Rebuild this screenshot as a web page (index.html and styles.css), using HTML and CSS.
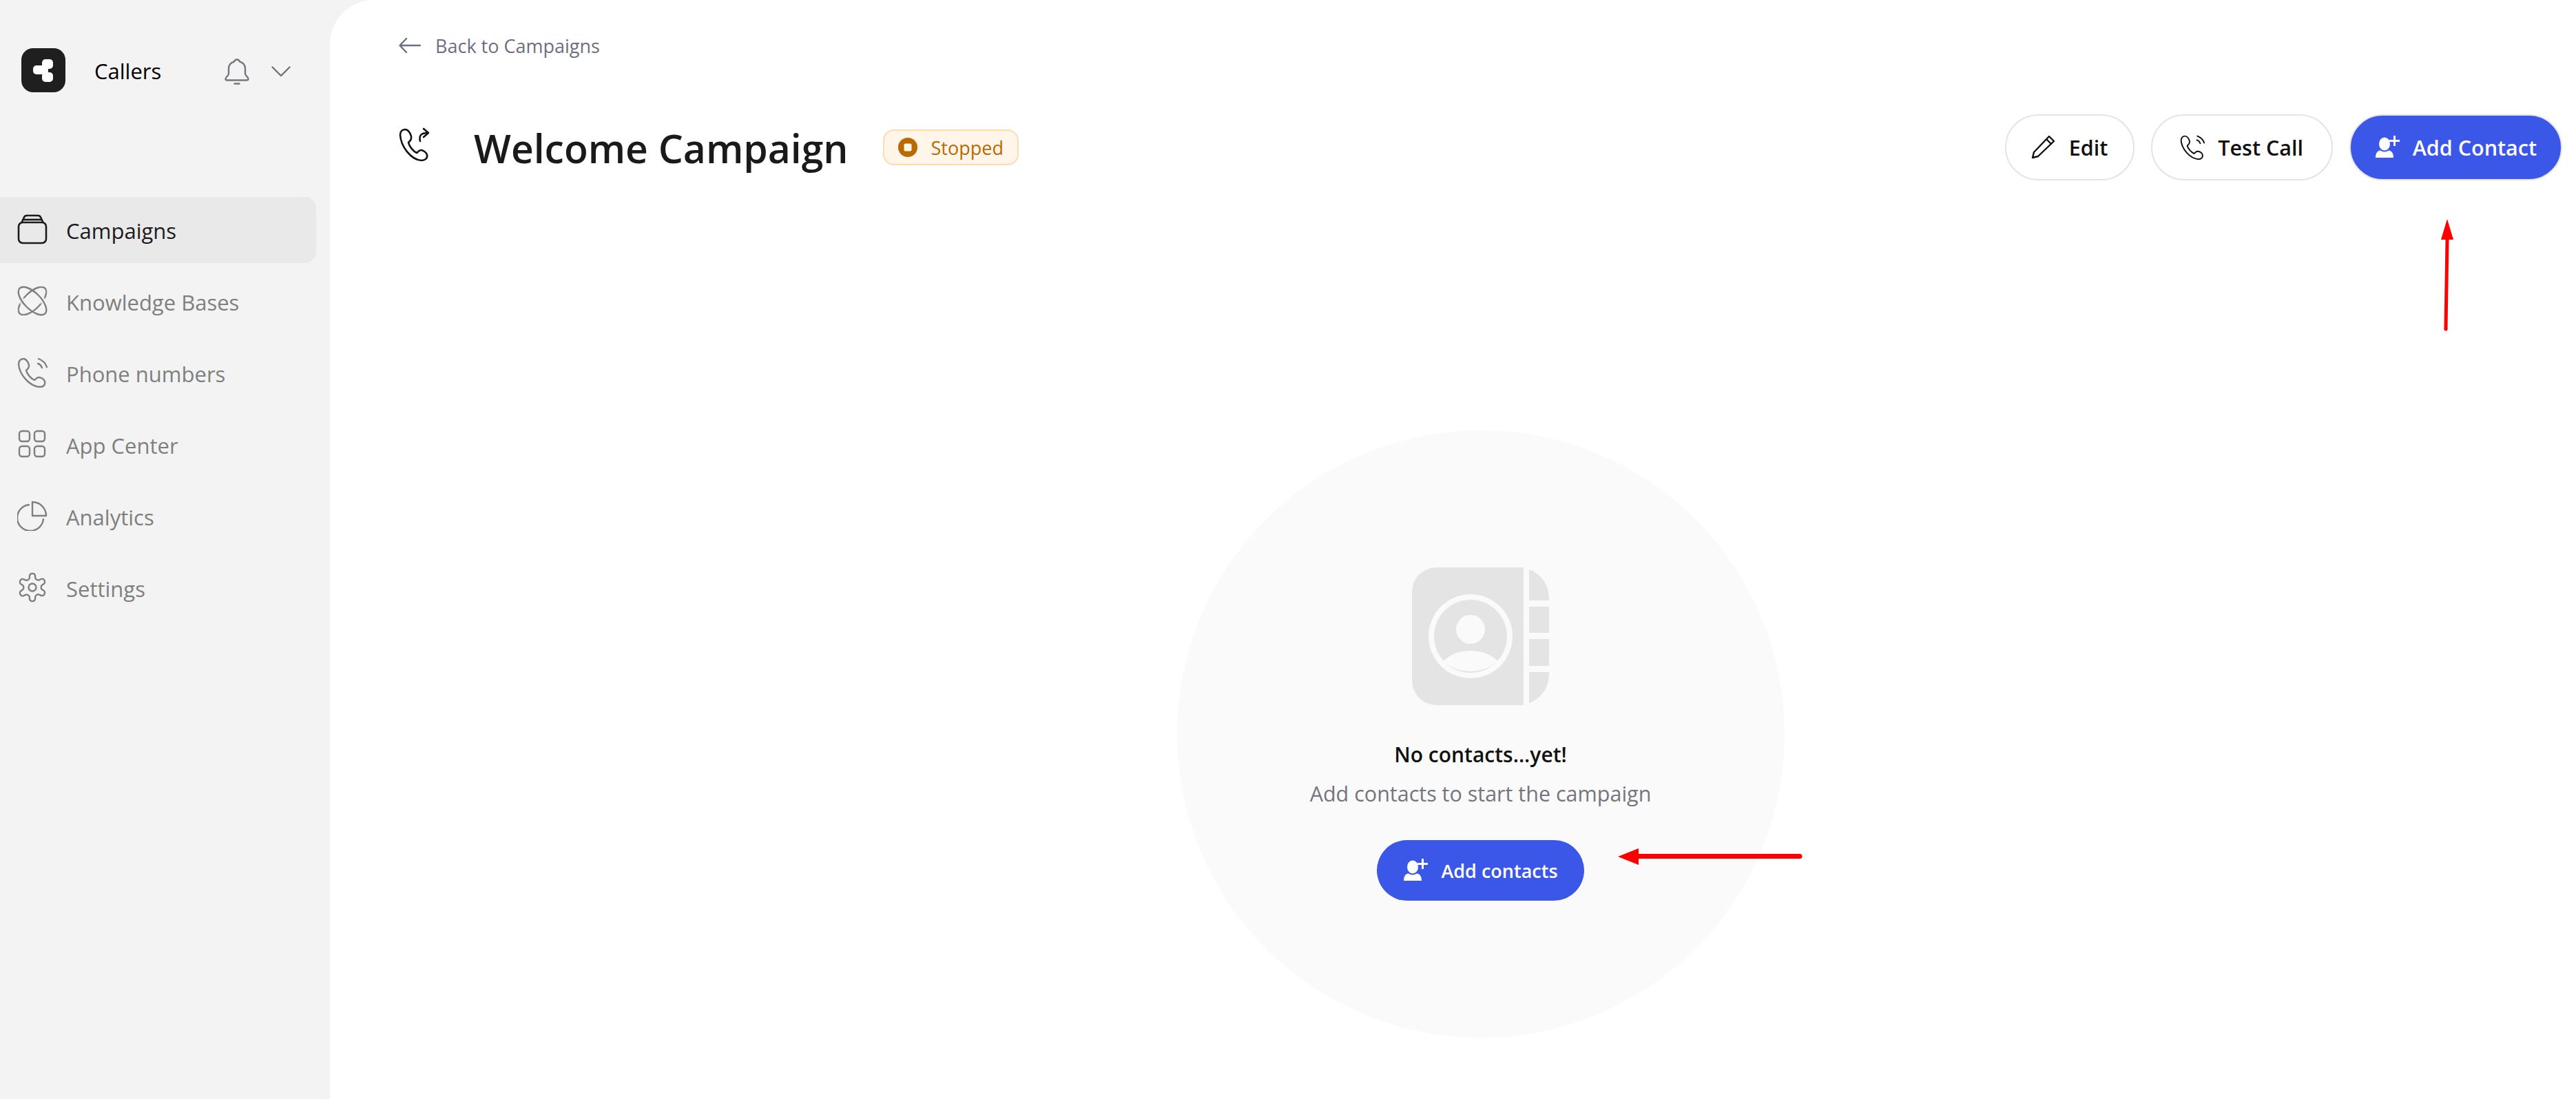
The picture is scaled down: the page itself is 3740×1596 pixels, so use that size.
FILE: index.html
```html
<!DOCTYPE html>
<html lang="en">
<head>
  <meta charset="UTF-8">
  <meta name="viewport" content="width=device-width, initial-scale=1.0">
  <title>Welcome Campaign</title>
  <link rel="stylesheet" href="styles.css">
</head>
<body>
  <aside class="sidebar">
    <div class="brand">
      <svg class="logo" viewBox="0 0 64 64">
        <rect width="64" height="64" rx="17" fill="#1f1f1f"/>
        <rect x="30" y="16" width="16" height="14" rx="5" fill="#fff"/>
        <rect x="30" y="35" width="16" height="14" rx="5" fill="#fff"/>
        <rect x="17" y="25" width="19" height="13" rx="5" fill="#fff"/>
        <rect x="30" y="26" width="9" height="12" fill="#fff"/>
      </svg>
      <span class="brand-name">Callers</span>
      <svg class="bell" viewBox="0 0 36 38" fill="none" stroke="#75757f" stroke-width="2.4" stroke-linejoin="round" stroke-linecap="round">
        <path d="M18 1.500c-2 0-3.500 1.400-4 3C8.500 6 6 10 6 15v7c0 3-4.500 4.500-4.500 7.500 0 1.500 1 2 2.500 2h28c1.500 0 2.500-.5 2.500-2 0-3-4.500-4.500-4.500-7.500v-7c0-5-2.500-9-8-10.500-.5-1.600-2-3-4-3z"/>
        <path d="M14.500 36.500h7"/>
      </svg>
      <svg class="chevron" viewBox="0 0 28 16" fill="none" stroke="#6b7570" stroke-width="2.400" stroke-linecap="round" stroke-linejoin="round">
        <path d="M1.500 1.500 14 14 26.500 1.500"/>
      </svg>
    </div>
    <nav class="nav">
      <a class="nav-item active">
        <svg class="nav-icon" viewBox="0 0 44 44" fill="none" stroke="currentColor" stroke-width="2.600" stroke-linejoin="round">
          <rect x="2" y="12" width="40" height="30" rx="6"/>
          <path d="M6 13 10 4.500Q11 2 14 2h16q3 0 4 2.500L38 13"/>
          <path d="M8.500 8h27"/>
        </svg>
        Campaigns
      </a>
      <a class="nav-item">
        <svg class="nav-icon" viewBox="0 0 44 44" fill="none" stroke="currentColor" stroke-width="2.400">
          <defs>
            <mask id="orbit-gap">
              <rect width="44" height="44" fill="#fff"/>
              <circle cx="6.600" cy="22" r="4.500" fill="#000"/>
              <circle cx="37.400" cy="22" r="4.500" fill="#000"/>
            </mask>
          </defs>
          <ellipse cx="22" cy="22" rx="26" ry="12" transform="rotate(45 22 22)"/>
          <g mask="url(#orbit-gap)">
            <ellipse cx="22" cy="22" rx="26" ry="12" transform="rotate(-45 22 22)"/>
          </g>
        </svg>
        Knowledge Bases
      </a>
      <a class="nav-item">
        <svg class="nav-icon" viewBox="0 0 44 44" fill="none" stroke="currentColor" stroke-width="2.400" stroke-linejoin="round" stroke-linecap="round">
          <path d="M9 2C5 2 2 5 2 10c1 14 15 32 31 33 5 0 8-3 7-8-1-4-6-6-9-6s-4 3-6 4c-5-2-11-9-12-14 2-2 5-4 4-8-1-4-4-9-8-9z"/>
          <path d="M30 9c3 1 5 3 6 6"/>
          <path d="M31 2c5 2 10 6 12 12"/>
        </svg>
        Phone numbers
      </a>
      <a class="nav-item">
        <svg class="nav-icon" viewBox="0 0 44 44" fill="none" stroke="currentColor" stroke-width="2.400">
          <rect x="3" y="3" width="15" height="15" rx="4"/>
          <rect x="25" y="3" width="15" height="15" rx="4"/>
          <rect x="3" y="25" width="15" height="15" rx="4"/>
          <rect x="25" y="25" width="15" height="15" rx="4"/>
        </svg>
        App Center
      </a>
      <a class="nav-item">
        <svg class="nav-icon" viewBox="0 0 44 44" fill="none" stroke="currentColor" stroke-width="2.400" stroke-linejoin="round">
          <path d="M18 6A19 19 0 1 0 38 26"/>
          <path d="M22 2a20 20 0 0 1 20 20H22z"/>
        </svg>
        Analytics
      </a>
      <a class="nav-item">
        <svg class="nav-icon" viewBox="0 0 24 24" fill="none" stroke="currentColor" stroke-width="1.300">
          <path d="M12.220 1h-.44a2 2 0 0 0-2 2v1.180a2 2 0 0 1-1 1.730l-.43.250a2 2 0 0 1-2 0l-1-.5a2 2 0 0 0-2.730.730l-.220.380a2 2 0 0 0 .730 2.730l.95.6a2 2 0 0 1 1 1.720v.51a2 2 0 0 1-1 1.740l-.95.590a2 2 0 0 0-.730 2.730l.220.380a2 2 0 0 0 2.730.730l1-.5a2 2 0 0 1 2 0l.43.250a2 2 0 0 1 1 1.730V21a2 2 0 0 0 2 2h.44a2 2 0 0 0 2-2v-1.180a2 2 0 0 1 1-1.730l.43-.250a2 2 0 0 1 2 0l1 .5a2 2 0 0 0 2.730-.730l.220-.390a2 2 0 0 0-.730-2.730l-.95-.58a2 2 0 0 1-1-1.740v-.5a2 2 0 0 1 1-1.740l.95-.590a2 2 0 0 0 .730-2.730l-.220-.380a2 2 0 0 0-2.730-.730l-1 .5a2 2 0 0 1-2 0l-.43-.250a2 2 0 0 1-1-1.730V3a2 2 0 0 0-2-2z"/>
          <circle cx="12" cy="12" r="3"/>
        </svg>
        Settings
      </a>
    </nav>
  </aside>

  <main class="main">
    <a class="back">
      <svg class="back-arrow" viewBox="0 0 32 24" fill="none" stroke="#6b7080" stroke-width="2.400" stroke-linecap="round" stroke-linejoin="round">
        <path d="M31 12H2M11 2 1.500 12 11 22"/>
      </svg>
      Back to Campaigns
    </a>

    <header class="header">
      <div class="title-group">
        <svg class="title-icon" viewBox="0 0 46 50" fill="none" stroke="#111" stroke-width="2.600" stroke-linejoin="round" stroke-linecap="round">
          <path d="M9 3C5 3 2 6 2 11c1 16 15 36 31 37 5 0 9-3 8-8-1-4-6-7-9-7s-4 3-6 4c-5-2-11-10-12-15 2-2 5-4 4-9-1-4-4-10-9-10z"/>
          <path d="M31 20c-2-8 1-12 11-12"/>
          <path d="M36 2l7 6-7 6"/>
        </svg>
        <h1 class="title">Welcome Campaign</h1>
        <span class="badge">
          <svg class="badge-dot" viewBox="0 0 28 28">
            <circle cx="14" cy="14" r="14" fill="#b96a00"/>
            <rect x="8.500" y="8.500" width="11" height="11" rx="2" fill="#fff6e9"/>
          </svg>
          Stopped
        </span>
      </div>
      <div class="actions">
        <button class="btn btn-edit">
          <svg class="btn-icon" viewBox="0 0 36 36" fill="none" stroke="#111" stroke-width="2.400" stroke-linejoin="round">
            <path d="M2 33 4 25 26 2 33 9 10 31z"/>
            <path d="M22 6 29 13"/>
          </svg>
          Edit
        </button>
        <button class="btn btn-test">
          <svg class="btn-icon" viewBox="0 0 44 44" fill="none" stroke="#111" stroke-width="2.400" stroke-linejoin="round" stroke-linecap="round">
            <path d="M9 2C5 2 2 5 2 10c1 14 15 32 31 33 5 0 8-3 7-8-1-4-6-6-9-6s-4 3-6 4c-5-2-11-9-12-14 2-2 5-4 4-8-1-4-4-9-8-9z"/>
            <path d="M30 9c3 1 5 3 6 6"/>
            <path d="M31 2c5 2 10 6 12 12"/>
          </svg>
          Test Call
        </button>
        <button class="btn primary">
          <svg class="btn-icon" viewBox="0 0 36 36" fill="#fff">
            <ellipse cx="14" cy="13" rx="8" ry="9.500"/>
            <path d="M1 33c0-7 3-10 7-10.500 3 2.500 9 2.500 12 0 4 .5 7 3.500 7 10.500z"/>
            <path d="M27 1h3v6h6v3h-6v6h-3v-6h-6V7h6z"/>
          </svg>
          Add Contact
        </button>
      </div>
    </header>

    <section class="empty">
      <svg class="empty-icon" viewBox="0 0 200 200">
        <path d="M38 0H162V200H38C15 200 0 185 0 162V38C0 15 15 0 38 0z" fill="#e4e4e4"/>
        <path d="M170 3c17 6 29 22 29 42v3H170zM170 57h29v38H170zM170 104h29v39H170zM170 152h29v3c0 20-12 36-29 42z" fill="#e4e4e4"/>
        <circle cx="85" cy="100" r="61" fill="#fafafa"/>
        <circle cx="85" cy="100" r="53" fill="#e4e4e4"/>
        <circle cx="85" cy="90" r="21" fill="#fafafa"/>
        <path d="M45 136c11-10 25-15 40-15s29 5 40 15a61 61 0 0 1-80 0z" fill="#fafafa"/>
      </svg>
      <h2 class="empty-title">No contacts...yet!</h2>
      <p class="empty-text">Add contacts to start the campaign</p>
      <button class="btn primary small">
        <svg class="btn-icon" viewBox="0 0 36 36" fill="#fff">
          <ellipse cx="14" cy="13" rx="8" ry="9.500"/>
          <path d="M1 33c0-7 3-10 7-10.500 3 2.500 9 2.500 12 0 4 .5 7 3.500 7 10.500z"/>
          <path d="M27 1h3v6h6v3h-6v6h-3v-6h-6V7h6z"/>
        </svg>
        Add contacts
      </button>
    </section>
  </main>

  <!-- red annotation arrows drawn on top of the screenshot -->
  <svg class="arrow arrow-up" viewBox="0 0 24 164">
    <path d="M12 0 21 30H14.500L12.500 160H7.500L9.500 30H3z" fill="#f00"/>
    <circle cx="10" cy="160" r="2.500" fill="#f00"/>
  </svg>
  <svg class="arrow arrow-left" viewBox="0 0 268 28">
    <path d="M0 14 30 2V10H264V17H30V26z" fill="#f00"/>
    <path d="M30 13.500H264" stroke="#f00" stroke-width="7" stroke-linecap="round"/>
  </svg>
</body>
</html>
```

FILE: styles.css
```css
* {
  box-sizing: border-box;
}
html, body {
  height: 100%;
}
body {
  margin: 0;
  display: flex;
  min-height: 1596px;
  overflow: hidden;
  position: relative;
  background-color: #f3f3f3;
  font-family: "Open Sans", "Noto Sans", sans-serif;
  color: #111;
}

/* sidebar */
.sidebar {
  width: 479px;
  flex-shrink: 0;
}
.brand {
  display: flex;
  align-items: center;
  height: 64px;
  margin-top: 70px;
  padding-left: 31px;
}
.logo {
  width: 64px;
  height: 64px;
}
.brand-name {
  margin-left: 42px;
  margin-top: 2px;
  font-size: 31px;
  font-weight: 500;
  color: #000;
  width: 189px;
}
.bell {
  width: 36px;
  height: 38px;
  margin-top: 4px;
}
.chevron {
  width: 28px;
  height: 16px;
  margin-left: 32px;
  margin-top: 4px;
}
.nav {
  margin-top: 152px;
  width: 459px;
  display: flex;
  flex-direction: column;
  gap: 8px;
}
.nav-item {
  display: flex;
  align-items: center;
  gap: 27px;
  height: 96px;
  padding-left: 25px;
  padding-top: 2px;
  border-radius: 0 16px 16px 0;
  font-size: 31px;
  font-weight: 500;
  color: #7f7f7f;
}
.nav-item.active {
  background-color: #e9e9e9;
  color: #1c1c1c;
}
.nav-icon {
  width: 44px;
  height: 44px;
  margin-bottom: 4px;
  flex-shrink: 0;
}

/* main */
.main {
  flex: 1;
  display: flex;
  flex-direction: column;
  padding: 0 20px 0 100px;
  background-color: #fff;
  border-top-left-radius: 64px;
}
.back {
  display: flex;
  align-items: center;
  gap: 21px;
  height: 32px;
  margin-top: 50px;
  font-size: 27px;
  color: #6b7080;
}
.back-arrow {
  width: 32px;
  height: 24px;
}
.header {
  display: flex;
  align-items: center;
  justify-content: space-between;
  height: 96px;
  margin-top: 84px;
}
.title-group {
  display: flex;
  align-items: center;
}
.title-icon {
  width: 46px;
  height: 50px;
  margin-top: -8px;
}
.title {
  margin: 2px 0 0 63px;
  font-size: 57px;
  font-weight: 600;
  color: #1a1a1a;
}
.badge {
  display: flex;
  align-items: center;
  gap: 20px;
  height: 52px;
  margin-left: 50px;
  padding: 0 20px;
  border: 2px solid #fddcab;
  border-radius: 16px;
  background-color: #fff6e9;
  font-size: 27px;
  color: #b96a00;
}
.badge-dot {
  width: 28px;
  height: 28px;
}
.actions {
  display: flex;
  gap: 24px;
}
.btn {
  display: flex;
  align-items: center;
  justify-content: center;
  gap: 19px;
  height: 96px;
  padding: 0 35px;
  border: 2px solid #e4e4e4;
  border-radius: 48px;
  background-color: #fff;
  font-family: inherit;
  font-size: 30.500px;
  font-weight: 600;
  color: #111;
}
.btn-edit {
  width: 188px;
}
.btn-test {
  width: 264px;
}
.btn.primary {
  background-color: #3a57e8;
  color: #fff;
}
.btn.small {
  height: 88px;
  padding: 0 38px;
  border: none;
  font-size: 27px;
}
.btn-icon {
  width: 36px;
  height: 36px;
}

/* empty state */
.empty {
  align-self: center;
  display: flex;
  flex-direction: column;
  align-items: center;
  width: 882px;
  height: 882px;
  margin-top: 363px;
  padding-top: 199px;
  border-radius: 50%;
  background-color: #fafafa;
}
.empty-icon {
  width: 200px;
  height: 200px;
}
.empty-title {
  margin: 50px 0 0;
  font-size: 30px;
  font-weight: 600;
  line-height: 44px;
}
.empty-text {
  margin: 12px 0 0;
  font-size: 30.500px;
  line-height: 44px;
  color: #75757f;
}
.empty .btn {
  margin-top: 46px;
}

/* annotations */
.arrow {
  position: absolute;
}
.arrow-up {
  left: 3541px;
  top: 318px;
  width: 24px;
  height: 164px;
}
.arrow-left {
  left: 2349px;
  top: 1230px;
  width: 268px;
  height: 28px;
}
```
